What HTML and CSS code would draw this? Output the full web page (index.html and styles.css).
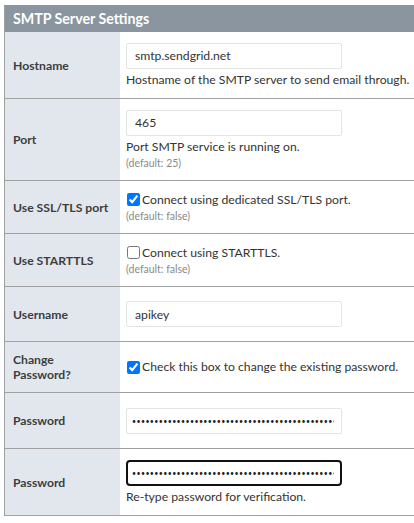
FILE: index.html
```html
<!DOCTYPE html>
<html>
<head>
<meta charset="utf-8">
<link rel="stylesheet" href="styles.css">
</head>
<body>
<div class="settings">
  <div class="head">SMTP Server Settings</div>

  <div class="row r-host">
    <div class="label">Hostname</div>
    <div class="value">
      <input class="field" type="text" value="smtp.sendgrid.net">
      <div class="help">Hostname of the SMTP server to send email through.</div>
    </div>
  </div>

  <div class="row r-port">
    <div class="label">Port</div>
    <div class="value">
      <input class="field" type="text" value="465">
      <div class="help">Port SMTP service is running on.</div>
      <div class="default">(default: 25)</div>
    </div>
  </div>

  <div class="row r-ssl">
    <div class="label">Use SSL/TLS port</div>
    <div class="value">
      <label class="check"><input type="checkbox" checked> Connect using dedicated SSL/TLS port.</label>
      <div class="default">(default: false)</div>
    </div>
  </div>

  <div class="row r-starttls">
    <div class="label">Use STARTTLS</div>
    <div class="value">
      <label class="check"><input type="checkbox"> Connect using STARTTLS.</label>
      <div class="default">(default: false)</div>
    </div>
  </div>

  <div class="row r-user">
    <div class="label">Username</div>
    <div class="value">
      <input class="field" type="text" value="apikey">
    </div>
  </div>

  <div class="row r-change">
    <div class="label narrow">Change Password?</div>
    <div class="value">
      <label class="check"><input type="checkbox" checked> Check this box to change the existing password.</label>
    </div>
  </div>

  <div class="row r-pass">
    <div class="label">Password</div>
    <div class="value">
      <input class="field secret" type="password" value="SG.abcdefghijklmnopqrstuv.abcdefghijklmnopqrstuvwxyzabcdefghijklmnopqrstuvwxyz0123456789">
    </div>
  </div>

  <div class="row r-pass2">
    <div class="label">Password</div>
    <div class="value">
      <input class="field secret focused" type="password" value="SG.abcdefghijklmnopqrstuv.abcdefghijklmnopqrstuvwxyzabcdefghijklmnopqrstuvwxyz0123456789">
      <div class="help">Re-type password for verification.</div>
    </div>
  </div>
</div>
</body>
</html>
```

FILE: styles.css
```css
html, body {
  margin: 0;
  padding: 0;
  background: #ffffff;
  overflow: hidden;
}

body {
  font-family: Lato, "Open Sans", sans-serif;
  font-size: 12.2px;
  color: #333333;
}

.settings {
  margin: 5px 0 0 4px;
  width: 440px;
  border-left: 1px solid #a0a0a0;
}

.head {
  height: 27px;
  line-height: 27px;
  background: #8b959f;
  color: #ffffff;
  font-weight: bold;
  font-size: 14.2px;
  padding-left: 8px;
}

.row {
  display: grid;
  grid-template-columns: 115px 1fr;
  border-bottom: 1px solid #a0a0a0;
  box-sizing: border-box;
}

.label {
  background: #e2e7ed;
  font-weight: bold;
  color: #3d3d3d;
  padding: 0 4px 0 8px;
  display: flex;
  align-items: center;
  line-height: 15px;
}

.label.narrow {
  padding-right: 30px;
}

.value {
  display: flex;
  flex-direction: column;
  justify-content: center;
  align-items: flex-start;
  padding-left: 6px;
}

.r-host { height: 67px; }
.r-port { height: 82px; }
.r-ssl { height: 53px; }
.r-starttls { height: 53px; }
.r-user { height: 55px; }
.r-change { height: 51px; }
.r-pass { height: 56px; }
.r-pass2 { height: 67px; }

.field {
  box-sizing: border-box;
  width: 216px;
  height: 26px;
  border: 1px solid #e4e4e4;
  border-radius: 2px;
  padding: 0 8px;
  margin: 0;
  font-family: inherit;
  font-size: 12.2px;
  color: #333333;
  background: #ffffff;
  outline: none;
}

.field.secret {
  font-size: 7px;
  letter-spacing: 0.4px;
  color: #222222;
  padding: 0 7px 0 5px;
}

.field.focused {
  border: 2px solid #111111;
  border-radius: 4px;
  padding: 0 6px 0 4px;
}

.help {
  margin-top: 3px;
  line-height: 16px;
}

.default {
  font-size: 10.5px;
  color: #8a8a8a;
  line-height: 13px;
  margin-top: 2px;
}

.check {
  display: flex;
  align-items: center;
  line-height: 16px;
}

.check input {
  width: 13px;
  height: 13px;
  margin: 0 2px 0 1px;
}
```
